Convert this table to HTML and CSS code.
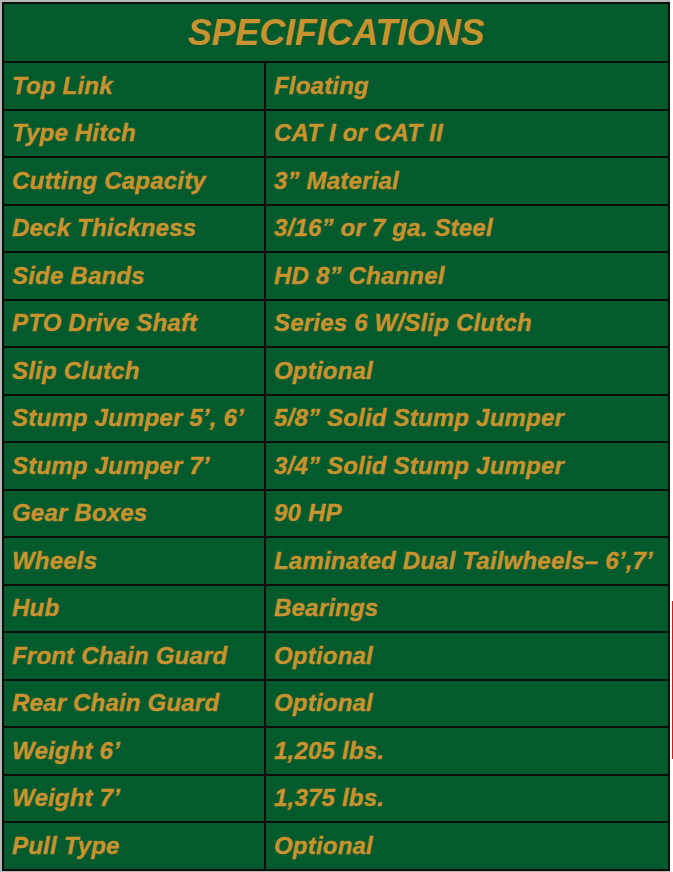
FILE: index.html
```html
<!DOCTYPE html>
<html>
<head>
<meta charset="utf-8">
<link rel="stylesheet" href="styles.css">
</head>
<body>
<div class="frame">
  <table class="specs">
    <colgroup>
      <col class="col-key">
      <col class="col-val">
    </colgroup>
    <thead>
      <tr><th colspan="2" class="title">SPECIFICATIONS</th></tr>
    </thead>
    <tbody>
      <tr><td>Top Link</td><td>Floating</td></tr>
      <tr><td>Type Hitch</td><td>CAT I or CAT II</td></tr>
      <tr><td>Cutting Capacity</td><td>3” Material</td></tr>
      <tr><td>Deck Thickness</td><td>3/16” or 7 ga. Steel</td></tr>
      <tr><td>Side Bands</td><td>HD 8” Channel</td></tr>
      <tr><td>PTO Drive Shaft</td><td>Series 6 W/Slip Clutch</td></tr>
      <tr><td>Slip Clutch</td><td>Optional</td></tr>
      <tr><td>Stump Jumper 5’, 6’</td><td>5/8” Solid Stump Jumper</td></tr>
      <tr><td>Stump Jumper 7’</td><td>3/4” Solid Stump Jumper</td></tr>
      <tr><td>Gear Boxes</td><td>90 HP</td></tr>
      <tr><td>Wheels</td><td>Laminated Dual Tailwheels– 6’,7’</td></tr>
      <tr><td>Hub</td><td>Bearings</td></tr>
      <tr><td>Front Chain Guard</td><td>Optional</td></tr>
      <tr><td>Rear Chain Guard</td><td>Optional</td></tr>
      <tr><td>Weight 6’</td><td>1,205 lbs.</td></tr>
      <tr><td>Weight 7’</td><td>1,375 lbs.</td></tr>
      <tr><td>Pull Type</td><td>Optional</td></tr>
    </tbody>
  </table>
  <div class="redmark"></div>
</div>
</body>
</html>
```

FILE: styles.css
```css
html, body {
  margin: 0;
  padding: 0;
  background: #ffffff;
}

.frame {
  position: relative;
  width: 670px;
  height: 872px;
  box-sizing: border-box;
  border-top: 2px solid #b5b8b6;
  border-left: 2px solid #b5b8b6;
  border-bottom: 2px solid #b5b8b6;
}

.specs {
  width: 668px;
  border-collapse: collapse;
  table-layout: fixed;
  background: #035a2d;
  font-family: "Liberation Sans", Arial, sans-serif;
  font-style: italic;
  font-weight: bold;
  color: #c8922f;
  border: 2px solid #0b0f0c;
}

.col-key {
  width: 262px;
}

.specs th,
.specs td {
  border: 2px solid #0b0f0c;
  padding: 0 0 0 8px;
  text-align: left;
  vertical-align: middle;
  white-space: nowrap;
  overflow: hidden;
}

.specs .title {
  height: 57px;
  padding: 0;
  text-align: center;
  font-size: 36px;
  letter-spacing: -0.2px;
}

.specs td {
  height: 45.5px;
  font-size: 24px;
  letter-spacing: 0.2px;
  -webkit-text-stroke: 0.4px #c8922f;
}

.redmark {
  position: absolute;
  left: 670px;
  top: 599px;
  width: 2px;
  height: 158px;
  background: #d21b1b;
}
```
